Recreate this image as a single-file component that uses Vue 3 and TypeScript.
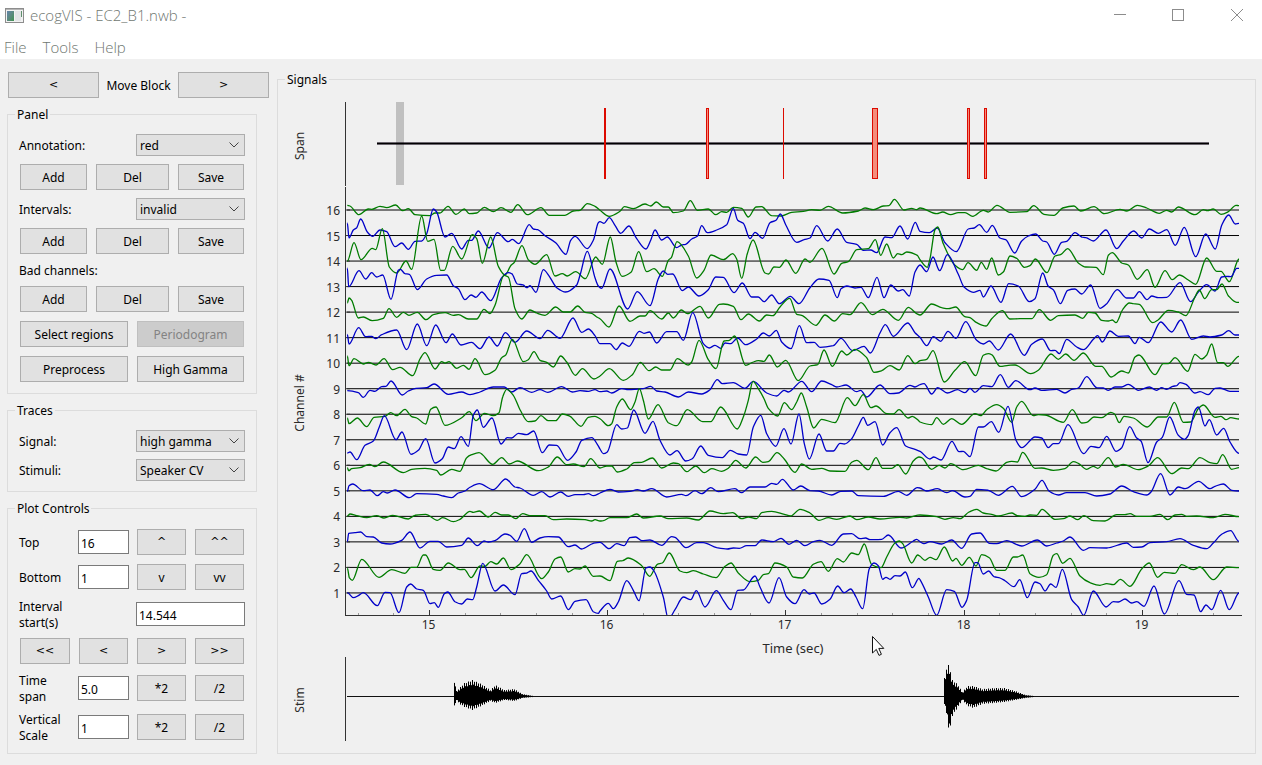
<script setup lang="ts">
import { ref } from 'vue'

interface Point { x: number; y: number }

const annotation = ref('red')
const interval = ref('invalid')
const signal = ref('high gamma')
const stimuli = ref('Speaker CV')
const top = ref('16')
const bottom = ref('1')
const start = ref('14.544')
const span = ref('5.0')
const scale = ref('1')

// Samples are stored at three units per pixel, in three consecutive blocks of 960 units.
const UNIT = 3
const BLOCK = 960

const samples: Record<number, string[]> = {
  16: [
    '202,45 210,47 237,73 265,56 275,57 300,48 320,52 347,44 368,61 385,55 405,73 450,76 465,68 480,68 504,48 528,72 553,56 568,70 590,68 613,51 640,64 663,52 693,66 713,43 742,73 783,52 808,75 855,75 880,62 900,60 922,40 945,48',
    '0,60 27,78 60,63 73,49 100,55 135,41 152,47 169,35 190,50 205,50 220,67 250,62 271,31 292,60 325,56 347,73 365,64 380,66 400,51 425,54 445,80 468,50 485,49 515,76 543,77 575,66 610,63 635,58 660,60 685,48 728,68 775,62 795,53 820,58 850,47 867,46 883,27 912,59 935,54 950,58',
    '0,53 50,70 68,65 92,73 115,67 135,67 158,78 190,60 205,65 231,45 270,66 320,64 341,46 372,72 402,75 428,53 462,47 482,62 522,49 553,70 600,57 620,62 652,45 680,53 718,69 740,60 755,65 775,50 825,73 850,58 862,61 880,56 903,72 925,64 948,45 957,46',
  ],
  15: [
    '202,98 207,143 220,119 230,112 242,86 262,125 278,138 300,119 320,124 345,169 365,158 385,177 405,153 425,152 440,130 460,56 470,65 495,140 515,129 545,176 565,150 575,150 595,122 627,173 652,127 685,154 697,147 716,160 748,103 760,116 773,118 795,136 827,157 858,192 872,150 885,138 922,175 940,150 955,97',
    '0,94 12,99 28,82 45,105 62,129 87,107 110,145 138,176 152,150 165,119 185,149 202,140 230,172 245,164 257,162 275,146 292,138 305,106 322,127 350,119 380,103 400,54 413,90 430,99 450,145 465,126 488,144 510,97 528,90 541,71 557,103 590,156 612,148 630,143 650,106 683,152 712,116 740,156 770,162 790,180 812,179 830,187 855,140 875,142 900,107 923,146 946,96',
    '0,123 28,127 52,113 75,157 109,184 145,116 163,113 178,103 200,126 217,105 240,143 257,148 284,188 305,152 325,137 347,131 368,152 380,155 403,192 425,156 440,153 465,127 485,140 498,142 520,152 558,119 590,175 610,152 641,122 665,143 688,116 715,129 740,118 766,165 793,111 827,199 857,131 886,176 905,105 926,74 946,101 957,99',
  ],
  14: [
    '202,212 222,157 243,208 277,174 287,178 307,115 328,230 350,248 378,212 395,237 425,77 443,153 462,147 482,240 493,240 518,168 545,206 577,133 590,145 607,219 632,140 655,228 675,254 693,225 703,216 726,166 745,208 765,222 800,193 825,257 847,250 862,257 887,244 916,265 947,200 955,208',
    '7,222 31,140 48,215 66,258 93,246 116,184 140,244 162,235 187,258 205,210 214,202 231,154 265,197 290,263 312,240 333,194 370,208 398,190 410,206 425,264 442,190 459,149 495,248 506,251 522,230 538,231 558,209 587,249 615,206 630,216 666,174 702,251 725,219 745,214 770,178 805,175 826,148 842,195 860,161 880,203 893,190 905,193 920,185 952,195',
    '0,208 22,231 30,205 45,118 53,110 70,160 105,225 128,238 144,217 170,240 184,216 200,237 215,203 235,254 250,245 270,197 290,204 313,231 330,226 346,206 381,247 405,197 423,192 443,175 475,218 497,230 528,231 550,253 565,195 577,187 605,218 625,224 652,267 682,238 705,291 735,241 757,268 778,254 805,269 827,282 860,203 890,243 903,243 928,274 957,206',
  ],
  13: [
    '202,233 206,289 237,241 257,266 275,247 290,260 308,254 333,327 355,240 361,237 375,250 388,252 412,298 440,266 470,255 500,254 520,286 535,295 555,328 573,314 588,321 605,305 632,331 665,262 685,247 695,250 712,281 730,284 740,292 750,286 768,306 790,238 808,258 830,292 857,305 890,284 900,255 922,183 945,262 955,287',
    '5,294 30,236 83,356 112,304 150,346 175,265 190,242 203,252 218,251 247,301 265,290 297,317 325,298 347,260 370,261 402,307 427,278 455,320 475,320 492,334 515,314 538,340 571,318 597,340 630,292 657,266 687,270 712,322 723,295 740,287 765,293 783,291 805,322 831,261 852,322 872,284 895,302 908,298 928,317 945,245',
    '0,224 20,244 39,200 59,241 82,193 115,252 132,290 160,306 180,300 190,320 213,287 243,336 266,280 295,287 328,334 345,325 368,248 385,288 400,298 421,340 443,300 465,296 485,311 512,284 540,354 560,340 592,298 620,323 640,323 658,304 681,328 695,317 715,322 740,321 780,277 812,334 835,305 860,283 885,302 905,260 920,258 933,259 950,234 957,234',
  ],
  12: [
    '202,338 207,323 215,330 235,383 250,380 277,391 310,384 327,355 350,381 370,366 387,375 412,366 438,388 460,373 495,367 520,375 535,373 565,386 590,386 612,357 630,370 645,345 672,255 685,260 705,355 725,386 750,359 770,368 795,375 827,350 850,365 870,365 893,347 915,366 935,369 950,380',
    '0,385 27,410 57,347 90,393 120,377 135,377 150,361 185,386 205,368 220,383 244,359 262,370 300,348 325,383 358,342 370,341 400,348 423,388 445,371 478,392 500,374 518,376 540,350 569,324 590,372 605,375 648,405 675,374 703,392 728,370 750,373 783,337 817,373 848,357 895,390 925,351 950,370',
    '0,374 35,341 65,352 85,355 107,350 133,378 150,382 170,397 198,407 215,385 247,361 270,386 300,385 335,385 358,358 392,390 415,376 465,374 488,384 505,366 525,368 545,390 565,392 577,389 588,397 608,358 628,338 640,340 658,342 698,397 715,388 745,360 775,365 797,376 825,320 838,299 854,325 875,298 890,298 906,281 925,316 950,336 957,336',
  ],
  11: [
    '202,432 207,461 236,412 257,439 275,438 287,445 305,433 350,419 380,478 412,401 440,466 467,404 498,457 517,431 543,464 575,456 600,475 627,440 652,467 676,427 705,456 740,422 780,445 803,420 840,444 879,383 905,426 925,416 945,436',
    '0,460 30,460 48,478 67,458 87,468 118,423 132,429 148,425 170,458 200,424 230,424 250,450 278,367 310,460 328,473 345,465 362,474 375,458 392,460 413,443 437,463 470,446 490,428 508,437 529,420 545,455 573,475 598,406 620,457 643,456 660,471 700,466 723,444 758,481 792,468 811,488 840,428 856,403 880,438 923,398 945,427',
    '0,441 20,466 40,439 62,453 84,423 108,444 137,394 170,450 190,461 208,452 235,479 272,431 313,495 335,462 367,446 392,481 405,480 418,490 440,447 470,470 490,478 520,447 533,436 547,455 570,422 595,438 625,437 645,460 658,441 685,457 722,395 755,425 782,389 815,447 850,437 870,440 905,434 926,421 945,434 957,434',
  ],
  10: [
    '202,497 207,526 222,505 250,521 265,516 288,524 312,505 338,538 360,531 398,556 420,506 435,487 465,536 485,514 495,518 507,514 530,534 550,525 567,537 585,505 615,553 645,540 665,502 677,494 697,447 730,514 745,508 762,484 780,510 800,516 820,530 842,497 860,515 886,555 907,535 942,566',
    '0,557 28,535 70,570 97,553 121,516 147,541 167,530 185,539 210,539 232,505 265,524 275,515 297,450 325,508 348,535 372,452 388,450 404,437 437,525 460,515 475,511 492,513 508,494 532,530 557,510 595,571 630,527 653,523 672,479 697,528 725,482 740,494 765,477 800,502 822,546 845,541 870,526 898,539 923,496 945,520',
    '0,511 20,507 39,481 73,575 105,540 134,514 167,556 190,495 205,490 215,493 240,528 265,525 285,524 332,550 355,540 393,491 415,507 437,491 462,510 490,488 527,528 545,528 573,560 605,542 625,548 645,500 657,494 705,553 730,520 745,520 765,502 803,543 825,492 845,506 860,494 875,461 893,517 910,517 923,528 957,498',
  ],
  9: [
    '202,601 235,607 250,621 270,600 285,603 305,589 318,588 333,572 367,614 385,602 408,594 440,592 462,581 505,612 545,605 570,613 600,605 640,590 673,590 695,605 720,592 755,606 780,598 803,606 845,589 877,605 900,601 925,603 945,598',
    '0,604 20,602 35,608 65,595 85,598 130,595 152,588 170,602 195,605 235,620 265,605 305,611 328,600 352,568 367,580 400,577 435,594 460,573 500,608 530,617 552,600 565,605 605,573 635,604 665,572 695,583 710,590 738,584 770,604 782,600 800,620 840,584 870,610 895,608 930,585 945,590',
    '0,583 12,580 35,611 53,592 82,608 112,598 135,607 150,594 165,606 190,586 215,589 241,553 265,591 287,571 330,598 345,593 365,600 410,597 435,608 455,597 475,593 500,559 530,592 550,593 565,600 585,590 605,590 625,582 655,600 688,590 710,600 725,592 740,597 758,588 770,586 780,577 798,582 825,608 840,604 865,613 885,594 900,593 930,603 957,603',
  ],
  8: [
    '202,53 207,70 232,53 260,79 282,51 315,48 332,37 350,46 375,27 395,49 410,53 437,71 452,27 468,20 495,75 545,52 568,34 588,61 613,39 640,46 657,37 668,-10 680,-33 700,-15 720,28 745,64 765,62 783,46 805,61 827,61 847,41 870,48 903,78 925,51 945,48',
    '0,55 25,76 35,70 50,20 67,-4 92,28 105,5 118,-35 130,0 145,56 174,13 205,67 230,76 262,28 308,64 332,64 362,20 412,86 430,50 445,0 459,-57 475,-35 492,-5 505,24 533,47 553,7 575,28 590,5 604,-22 620,20 641,83 665,57 705,67 742,-8 765,16 790,-17 813,22 828,17 860,40 880,41 897,28 925,53 937,48 955,60',
    '0,65 35,73 50,52 70,72 95,55 125,72 165,40 182,46 200,28 230,13 250,24 275,66 290,20 305,3 340,46 355,43 375,44 430,66 457,28 485,68 500,66 522,50 545,52 572,36 583,40 598,67 612,48 640,53 682,80 715,50 740,50 763,6 790,66 812,65 835,25 850,14 885,51 903,48 918,58 932,52 957,56',
  ],
  7: [
    '202,158 210,155 230,178 255,135 280,122 298,80 313,46 348,118 366,95 393,162 415,150 437,115 465,188 487,175 505,140 523,145 543,109 565,138 580,45 592,29 610,81 636,53 663,131 682,112 695,113 715,99 740,103 761,92 787,157 808,134 830,135 863,180 888,155 905,120 935,112 955,137',
    '0,146 10,160 22,155 50,73 65,86 82,83 101,29 135,99 159,63 180,120 210,164 231,151 257,182 277,175 302,137 325,165 367,172 391,150 415,161 440,164 460,80 482,45 500,100 527,138 552,85 573,131 597,41 613,130 628,176 657,101 680,152 700,152 720,129 733,131 755,115 775,77 790,51 803,75 825,64 848,134 870,97 890,82 917,137 945,147',
    '0,153 30,176 41,170 63,179 96,123 117,154 130,153 150,169 175,80 190,80 214,64 236,96 264,18 288,120 305,142 345,110 365,113 385,142 400,130 415,130 444,73 491,160 513,138 537,142 560,108 588,153 605,142 629,79 650,113 663,122 684,187 710,125 727,111 749,50 775,105 793,117 805,105 825,30 835,20 855,77 868,58 890,104 911,84 930,125 957,159',
  ],
  6: [
    '202,202 206,211 215,205 240,202 268,192 285,199 310,185 370,217 395,207 435,204 470,210 482,224 515,207 540,213 560,172 575,163 597,157 638,192 665,172 688,191 712,182 775,211 805,200 832,170 860,193 880,191 912,199 932,175 955,200',
    '0,203 20,197 35,197 52,215 80,206 103,187 125,186 157,173 185,203 220,188 235,190 260,214 287,197 313,217 335,205 365,213 385,204 407,180 437,203 467,170 488,186 505,184 531,157 552,175 585,216 605,191 635,207 665,204 690,212 735,213 755,186 770,180 805,208 828,172 848,204 875,204 893,193 917,221 940,182 957,170',
    '5,172 35,207 57,195 75,203 92,190 130,208 175,195 200,205 228,212 260,186 275,183 292,185 308,156 345,204 365,203 400,210 435,205 460,184 475,189 500,207 520,198 533,204 565,172 587,200 610,192 655,208 685,197 713,172 755,220 785,203 805,205 840,172 870,187 890,190 908,163 935,207 957,202',
  ],
  5: [
    '202,274 207,256 218,251 250,271 270,269 292,286 310,274 322,278 345,269 388,292 410,280 470,282 490,287 515,292 535,278 555,272 570,261 598,250 640,268 677,236 705,260 720,263 760,285 785,274 810,290 842,275 865,288 885,283 910,283 925,280 940,286',
    '0,278 30,267 55,275 90,273 112,268 130,272 155,265 200,290 245,282 258,286 285,271 305,280 332,262 355,274 405,265 425,277 450,260 495,260 515,249 530,252 547,237 580,269 602,257 630,271 655,272 695,284 722,273 755,272 775,286 850,288 895,273 920,285 952,262',
    '0,263 20,272 52,265 80,277 97,271 135,290 150,288 170,267 205,270 235,285 277,258 305,289 345,267 366,240 388,273 415,284 440,277 495,277 530,287 570,281 605,257 640,274 680,284 693,275 722,220 750,284 775,260 795,265 836,243 870,265 885,258 910,251 935,270 957,272',
  ],
  4: [
    '202,347 210,341 230,346 260,352 290,346 312,353 338,345 385,356 405,345 437,342 472,360 488,352 520,364 540,357 570,333 580,336 598,332 625,350 645,336 665,344 685,344 707,355 728,340 750,346 795,346 820,358 860,356 915,358 935,362 945,358',
    '0,362 10,361 30,352 80,352 110,341 130,353 180,347 205,355 260,353 295,359 330,332 370,340 398,337 425,355 445,350 470,355 485,337 515,333 553,342 572,347 600,327 630,338 657,360 685,352 710,357 750,347 770,358 805,350 840,356 900,351 920,353 950,345',
    '0,344 50,349 75,357 100,352 120,355 147,335 170,327 190,338 215,342 235,347 275,338 292,346 315,348 330,344 350,345 366,327 405,357 430,355 450,347 472,358 492,346 520,361 555,362 590,343 615,343 630,340 650,348 690,348 720,342 743,358 765,344 785,342 800,348 830,347 880,352 915,342 957,349',
  ],
  3: [
    '202,424 206,399 225,397 242,395 260,409 280,410 305,428 330,431 365,420 390,395 420,443 450,423 475,423 500,440 545,435 565,413 592,436 612,422 625,425 645,421 675,401 690,405 710,423 733,385 755,426 780,413 805,409 835,410 865,439 885,434 905,446 940,429',
    '0,426 27,445 50,430 72,436 90,412 107,410 125,421 150,419 185,435 215,409 225,411 258,442 290,427 310,427 350,442 382,446 400,443 418,444 440,436 465,436 485,419 520,424 543,414 567,432 590,420 615,436 640,424 660,420 695,435 730,401 755,400 780,415 797,413 810,418 845,417 865,404 903,443 940,422 950,417',
    '0,424 12,430 30,424 65,431 95,419 125,444 155,401 180,398 208,429 230,430 260,421 305,437 352,419 380,437 410,428 430,422 450,410 490,450 510,442 560,443 620,428 640,441 665,440 690,427 740,424 780,415 820,435 860,445 880,428 905,402 932,391 957,423',
  ],
  2: [
    '202,503 208,532 217,540 245,477 297,531 335,508 375,519 393,501 410,501 430,464 437,464 460,507 480,510 505,488 540,508 553,507 573,532 600,497 615,498 632,484 650,491 670,473 693,508 720,490 740,463 785,535 805,515 825,476 842,470 865,515 885,505 900,506 915,497 940,528',
    '0,527 30,541 52,483 68,481 85,473 125,496 149,528 172,492 187,488 208,458 240,512 260,517 280,511 310,521 348,532 375,498 393,488 415,518 450,544 475,540 490,523 505,520 525,488 560,500 580,530 607,533 640,492 663,484 685,513 712,475 730,485 755,458 775,463 793,431 815,493 843,502 860,470 885,428 898,422 908,430 935,488 953,464',
    '0,468 15,480 30,471 48,478 73,440 98,482 108,474 125,495 148,471 168,497 185,463 208,472 230,510 255,510 280,470 292,470 308,464 330,520 357,531 380,523 400,465 410,460 428,489 450,474 480,527 510,547 540,555 560,550 580,553 601,537 630,558 665,506 688,488 713,531 733,516 765,519 785,493 820,508 840,500 880,538 920,500 957,502',
  ],
  1: [
    '202,577 220,592 235,586 250,577 292,616 315,576 330,577 357,637 380,560 392,551 410,566 430,570 450,610 463,607 475,621 493,580 503,575 525,604 545,611 562,596 578,598 590,560 608,489 645,572 670,554 705,583 725,520 740,518 753,512 775,540 800,572 815,596 842,587 865,628 885,603 918,598 940,634 955,639',
    '0,632 25,609 40,625 55,605 80,541 100,570 117,601 138,503 150,500 162,512 190,590 205,655 225,628 250,590 272,598 289,571 315,620 349,571 370,600 393,628 413,570 430,569 465,527 480,560 507,608 537,532 560,590 585,610 612,568 628,581 642,578 665,611 690,597 713,557 732,577 752,566 768,590 788,625 808,505 822,488 835,496 848,537 858,531 870,537 885,526 900,527 916,515 937,562 957,534',
    '0,538 25,590 50,645 80,568 103,573 126,621 140,600 165,487 173,487 190,521 206,512 222,529 240,533 255,541 282,559 299,538 322,592 345,545 360,550 375,572 392,551 408,561 427,507 455,598 475,620 491,645 520,572 558,620 580,604 595,605 615,596 635,608 650,604 672,618 702,557 733,641 777,541 800,582 822,584 842,634 858,614 875,628 902,570 928,628 957,578',
  ],
}

function parseChannel(n: number): Point[] {
  const originY = n > 8 ? 190 : 400
  const points: Point[] = []
  samples[n].forEach((block, i) => {
    for (const pair of block.split(' ')) {
      const [x, y] = pair.split(',').map(Number)
      points.push({ x: 280 + (x + i * BLOCK) / UNIT, y: originY + (y + 1) / UNIT })
    }
  })
  return points.filter((p, i) => i === 0 || p.x > points[i - 1].x)
}

// Monotone cubic curve: flat at each extremum, no overshoot in between.
function smooth(p: Point[]): string {
  const slope = (i: number): number => (p[i + 1].y - p[i].y) / (p[i + 1].x - p[i].x)
  const tangents = p.map((_, i) => {
    if (i === 0 || i === p.length - 1) return 0
    const a = slope(i - 1)
    const b = slope(i)
    return a * b <= 0 ? 0 : (2 * a * b) / (a + b)
  })
  let d = `M${p[0].x.toFixed(1)} ${p[0].y.toFixed(1)}`
  for (let i = 1; i < p.length; i++) {
    const h = (p[i].x - p[i - 1].x) / 3
    const c = [
      p[i - 1].x + h, p[i - 1].y + tangents[i - 1] * h,
      p[i].x - h, p[i].y - tangents[i] * h,
      p[i].x, p[i].y,
    ]
    d += 'C' + c.map((v) => v.toFixed(1)).join(' ')
  }
  return d
}

const channels = Array.from({ length: 16 }, (_, i) => {
  const n = 16 - i
  return { n, y: 210 + i * 25.53, color: n % 2 ? '#0000c8' : '#007c00', path: smooth(parseChannel(n)) }
})

const majorTicks = [15, 16, 17, 18, 19].map((t) => ({ t, x: Math.round(429 + (t - 15) * 178.2) + 0.5 }))
const minorTicks = Array.from({ length: 25 }, (_, i) => i - 2)
  .filter((i) => i % 5 !== 0)
  .map((i) => Math.round(429 + i * 35.64) + 0.5)

const marks = [
  { x: 604, w: 2 }, { x: 706, w: 3 }, { x: 783, w: 1 },
  { x: 872, w: 6 }, { x: 967, w: 3 }, { x: 984, w: 3 },
]

// Envelope knots of the stimulus audio: x, upper edge, lower edge.
const bursts: number[][][] = [
  [[454, 682, 706], [455, 682, 706], [456, 691, 700], [459, 688, 704], [464, 683, 707], [472, 680, 710], [481, 684, 706], [490, 690, 701], [495, 685, 703], [504, 690, 700], [514, 689, 701], [522, 694, 698], [533, 696, 697]],
  [[944, 678, 704], [946, 668, 714], [947, 664, 722], [949, 666, 733], [952, 680, 716], [957, 684, 708], [962, 692, 700], [967, 686, 706], [973, 686, 708], [982, 689, 704], [994, 688, 703], [1004, 688, 702], [1015, 691, 700], [1025, 695, 698], [1034, 696, 697]],
]

const ripple = [1, 0.74, 0.94, 0.7]

function waveform(knots: number[][]): string {
  const mid = 696.5
  let d = ''
  for (let i = 1; i < knots.length; i++) {
    const [x0, u0, l0] = knots[i - 1]
    const [x1, u1, l1] = knots[i]
    for (let x = x0; x < x1; x++) {
      const f = (x - x0) / (x1 - x0)
      const k = ripple[x % 4]
      const upper = mid + (u0 + (u1 - u0) * f - mid) * k
      const lower = mid + (l0 + (l1 - l0) * f - mid) * k
      d += `M${x + 0.5} ${upper.toFixed(1)}V${lower.toFixed(1)}`
    }
  }
  return d
}
</script>

<template>
  <div class="window">
    <header class="titlebar">
      <svg class="app-icon" width="19" height="15" viewBox="0 0 19 15" aria-hidden="true">
        <defs>
          <linearGradient id="icon-fill" x1="0" y1="0" x2="1" y2="1">
            <stop offset="0" stop-color="#6484ac" />
            <stop offset="0.5" stop-color="#5c8a80" />
            <stop offset="1" stop-color="#3f9150" />
          </linearGradient>
        </defs>
        <rect x="0.5" y="0.5" width="18" height="14" fill="#f2f2f2" stroke="#8d8d8d" />
        <rect x="1" y="1" width="17" height="1" fill="#b5b5b5" />
        <rect x="2" y="3" width="7" height="10" fill="url(#icon-fill)" />
        <rect x="10" y="3" width="6" height="10" fill="#e2e4e6" />
        <rect x="16" y="3" width="1" height="6" fill="#5f8f6c" />
      </svg>
      <span class="title">ecogVIS - EC2_B1.nwb -</span>
      <div class="window-buttons">
        <button type="button" aria-label="Minimize">
          <svg width="12" height="12" viewBox="0 0 12 12"><path d="M0 5.5H12" stroke="#8c8c8c" /></svg>
        </button>
        <button type="button" aria-label="Maximize">
          <svg width="12" height="12" viewBox="0 0 12 12"><rect x="0.5" y="0.5" width="11" height="11" fill="none" stroke="#8c8c8c" /></svg>
        </button>
        <button type="button" aria-label="Close">
          <svg width="12" height="12" viewBox="0 0 12 12"><path d="M0 0L12 12M12 0L0 12" stroke="#8c8c8c" /></svg>
        </button>
      </div>
    </header>
    <nav class="menubar">
      <a href="#file">File</a>
      <a href="#tools">Tools</a>
      <a href="#help">Help</a>
    </nav>

    <main class="content">
      <div class="sidebar">
        <div class="move-block">
          <button class="symbol" type="button">&lt;</button>
          <span>Move Block</span>
          <button class="symbol" type="button">&gt;</button>
        </div>

        <fieldset class="group panel">
          <legend>Panel</legend>
          <div class="field">
            <label for="annotation">Annotation:</label>
            <div class="select">
              <select id="annotation" v-model="annotation"><option>red</option></select>
              <svg width="10" height="6" viewBox="0 0 10 6"><path d="M0.5 0.5L5 5L9.5 0.5" fill="none" stroke="#444" /></svg>
            </div>
          </div>
          <div class="triple">
            <button type="button">Add</button><button type="button">Del</button><button type="button">Save</button>
          </div>
          <div class="field">
            <label for="intervals">Intervals:</label>
            <div class="select">
              <select id="intervals" v-model="interval"><option>invalid</option></select>
              <svg width="10" height="6" viewBox="0 0 10 6"><path d="M0.5 0.5L5 5L9.5 0.5" fill="none" stroke="#444" /></svg>
            </div>
          </div>
          <div class="triple">
            <button type="button">Add</button><button type="button">Del</button><button type="button">Save</button>
          </div>
          <div class="caption">Bad channels:</div>
          <div class="actions">
            <div class="triple">
              <button type="button">Add</button><button type="button">Del</button><button type="button">Save</button>
            </div>
            <div class="double">
              <button type="button">Select regions</button>
              <button type="button" disabled>Periodogram</button>
            </div>
            <div class="double">
              <button type="button">Preprocess</button>
              <button type="button">High Gamma</button>
            </div>
          </div>
        </fieldset>

        <fieldset class="group traces">
          <legend>Traces</legend>
          <div class="field">
            <label for="signal">Signal:</label>
            <div class="select">
              <select id="signal" v-model="signal"><option>high gamma</option></select>
              <svg width="10" height="6" viewBox="0 0 10 6"><path d="M0.5 0.5L5 5L9.5 0.5" fill="none" stroke="#444" /></svg>
            </div>
          </div>
          <div class="field">
            <label for="stimuli">Stimuli:</label>
            <div class="select">
              <select id="stimuli" v-model="stimuli"><option>Speaker CV</option></select>
              <svg width="10" height="6" viewBox="0 0 10 6"><path d="M0.5 0.5L5 5L9.5 0.5" fill="none" stroke="#444" /></svg>
            </div>
          </div>
        </fieldset>

        <fieldset class="group">
          <legend>Plot Controls</legend>
          <div class="controls">
            <label for="top">Top</label>
            <input id="top" v-model="top" type="text" />
            <button class="symbol" type="button">^</button>
            <button class="symbol" type="button">^^</button>

            <label for="bottom">Bottom</label>
            <input id="bottom" v-model="bottom" type="text" />
            <button type="button">v</button>
            <button type="button">vv</button>

            <label class="wide-label" for="start">Interval<br />start(s)</label>
            <input id="start" v-model="start" class="wide-input" type="text" />

            <button class="symbol" type="button">&lt;&lt;</button>
            <button class="symbol" type="button">&lt;</button>
            <button class="symbol" type="button">&gt;</button>
            <button class="symbol" type="button">&gt;&gt;</button>

            <label for="span">Time<br />span</label>
            <input id="span" v-model="span" type="text" />
            <button type="button">*2</button>
            <button type="button">/2</button>

            <label for="scale">Vertical<br />Scale</label>
            <input id="scale" v-model="scale" type="text" />
            <button type="button">*2</button>
            <button type="button">/2</button>
          </div>
        </fieldset>
      </div>

      <fieldset class="signals">
        <legend>Signals</legend>
        <svg class="plot" viewBox="278 87 977 666" role="img" aria-label="Signals">
          <defs>
            <clipPath id="plot-area"><rect x="346" y="187" width="894" height="428" /></clipPath>
          </defs>

          <path d="M345.5 102V186M345.5 187V616M345 615.5H1242M345.5 657V741" class="axis" />

          <path d="M377 143.5H1209" stroke="#6b656e" stroke-width="3" />
          <path d="M377 143.5H1209" stroke="#000" />
          <rect x="396" y="102" width="8" height="83" fill="#000" fill-opacity="0.2" />
          <template v-for="m in marks" :key="m.x">
            <rect :x="m.x" y="108" :width="m.w" height="71" fill="#dc0a00" />
            <rect v-if="m.w > 2" :x="m.x + 1" y="109" :width="m.w - 2" height="69" fill="#f48d7c" />
          </template>

          <g v-for="c in channels" :key="c.n">
            <path :d="`M347 ${c.y}H1239`" stroke="#000" />
            <path :d="`M345 ${c.y}H350`" class="axis" />
            <text x="340" :y="c.y + 5" text-anchor="end">{{ c.n }}</text>
          </g>
          <g clip-path="url(#plot-area)">
            <path v-for="c in channels" :key="c.n" :d="c.path" :stroke="c.color" fill="none" stroke-width="1.3" />
          </g>

          <path v-for="x in minorTicks" :key="x" :d="`M${x} 613V615`" stroke="#999" />
          <g v-for="m in majorTicks" :key="m.t">
            <path :d="`M${m.x} 610V615`" class="axis" />
            <text :x="m.x - 1" y="629" text-anchor="middle">{{ m.t }}</text>
          </g>
          <text class="axis-title" x="793" y="653" text-anchor="middle">Time (sec)</text>
          <text transform="translate(304 146) rotate(-90)" text-anchor="middle">Span</text>
          <text transform="translate(304 403) rotate(-90)" text-anchor="middle">Channel #</text>
          <text transform="translate(304 700) rotate(-90)" text-anchor="middle">Stim</text>

          <path d="M347 696.5H1239" stroke="#111" />
          <path v-for="(b, i) in bursts" :key="i" :d="waveform(b)" stroke="#000" />

          <path d="M872.5 636.5V653L876.3 649.4L879 655.4L881.4 654.3L878.8 648.4H883.8Z" fill="#fff" stroke="#111" />
        </svg>
      </fieldset>
    </main>
  </div>
</template>

<style>
body {
  margin: 0;
  background: #f0f0f0;
}
</style>

<style scoped>
.window {
  display: flex;
  flex-direction: column;
  min-height: 100vh;
  background: #f0f0f0;
  color: #000;
  font: 12px/16px "Noto Sans", sans-serif;
}

.titlebar {
  display: flex;
  align-items: center;
  height: 30px;
  padding-left: 5px;
  background: #fff;
}

.title {
  margin-left: 6px;
  color: #6f7771;
  font: 300 15px/20px "Open Sans", sans-serif;
}

.window-buttons {
  display: flex;
  margin-left: auto;
}

.window-buttons button {
  display: grid;
  box-sizing: border-box;
  place-items: center;
  width: 58px;
  height: 30px;
  padding: 0 2px 0 0;
  border: 0;
  background: none;
}

.window-buttons button:last-child {
  width: 54px;
  padding: 0 0 0 4px;
}

.menubar {
  display: flex;
  gap: 16px;
  height: 29px;
  padding-left: 4px;
  background: #fff;
}

.menubar a {
  color: #6f7771;
  font: 300 15px/34px "Open Sans", sans-serif;
  text-decoration: none;
}

.content {
  display: flex;
  flex: 1;
  gap: 8px;
  padding: 12px 6px 11px 7px;
}

.sidebar {
  display: flex;
  flex: none;
  flex-direction: column;
  gap: 8px;
  width: 262px;
}

.move-block {
  display: grid;
  grid-template-columns: 91px 1fr 91px;
  align-items: center;
  padding: 1px 0 0 1px;
  text-align: center;
}

.move-block span {
  padding-top: 2px;
}

.content button {
  box-sizing: border-box;
  width: 100%;
  height: 26px;
  padding: 2px 0 0;
  border: 1px solid #adadad;
  background: #e1e1e1;
  color: #000;
  font: inherit;
}

.content .symbol {
  padding: 0;
  font-family: "DejaVu Sans", sans-serif;
  font-size: 11px;
}

.content button:disabled {
  border-color: #bfbfbf;
  background: #ccc;
  color: #838383;
}

fieldset {
  box-sizing: border-box;
  min-width: 0;
  margin: 0;
  border: 1px solid #dcdcdc;
}

legend {
  padding: 2px 2px 0;
  line-height: 14px;
}

.group {
  width: 250px;
  padding: 12px 12px 11px;
}

.group legend {
  margin-left: -5px;
}

.panel {
  display: flex;
  flex-direction: column;
  gap: 8px;
}

.traces {
  display: flex;
  flex-direction: column;
  gap: 7px;
  padding-bottom: 10px;
}

.field {
  display: grid;
  grid-template-columns: 1fr 109px;
  align-items: center;
  margin: 0 -1px;
}

.field label {
  padding-top: 2px;
}

.select {
  position: relative;
}

.select select {
  display: block;
  box-sizing: border-box;
  width: 100%;
  height: 22px;
  padding: 2px 0 0 3px;
  border: 1px solid #adadad;
  border-radius: 0;
  appearance: none;
  background: #e1e1e1;
  color: #000;
  font: inherit;
}

.select svg {
  position: absolute;
  top: 8px;
  right: 6px;
  pointer-events: none;
}

.triple,
.double {
  display: grid;
  gap: 9px;
}

.triple {
  grid-template-columns: 67fr 73fr 66fr;
}

.double {
  grid-template-columns: 108fr 107fr;
}

.caption {
  height: 16px;
  margin-left: -1px;
  line-height: 18px;
}

.actions {
  display: grid;
  gap: 9px;
}

.controls {
  display: grid;
  grid-template-columns: 50fr 49fr 49fr 49fr;
  grid-template-rows: 26px 26px 30px 26px 30px 30px;
  gap: 9px;
  align-items: center;
  padding-top: 1px;
}

.controls label {
  margin-left: -1px;
  padding-top: 2px;
}

.controls input {
  box-sizing: border-box;
  min-width: 0;
  height: 24px;
  margin: 0 -1px;
  padding: 2px 2px 0;
  border: 1px solid #7a7a7a;
  background: #fff;
  color: #000;
  font: inherit;
}

.wide-label,
.wide-input {
  grid-column: span 2;
}

.signals {
  flex: 1;
  padding: 0;
}

.signals legend {
  margin-left: 7px;
}

.plot {
  display: block;
  width: 100%;
}

.plot text {
  fill: #2a2a2a;
  font: 12px "Noto Sans", sans-serif;
}

.plot .axis-title {
  font-size: 13px;
}

.axis {
  fill: none;
  stroke: #333;
}
</style>
